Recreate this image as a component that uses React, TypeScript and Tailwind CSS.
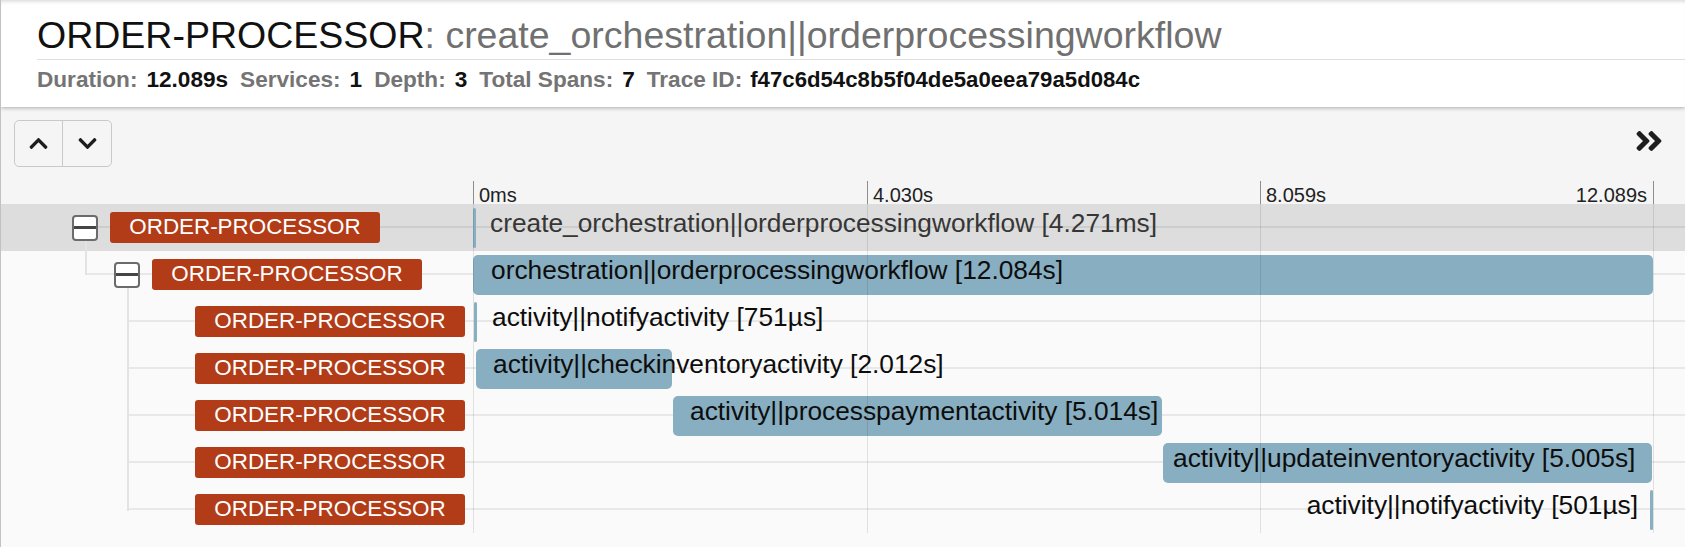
import React from "react";
import { FaChevronUp, FaChevronDown, FaAngleDoubleRight } from "react-icons/fa";

type RowData = {
  level: number;
  toggle?: boolean;
  selected?: boolean;
  barLeft: number;
  barWidth: number;
  label: string;
  labelLeft?: number;
  labelRight?: number;
  dim?: boolean;
};

const rows: RowData[] = [
  { level: 0, toggle: true, selected: true, barLeft: 0, barWidth: 3, label: "create_orchestration||orderprocessingworkflow [4.271ms]", labelLeft: 17, dim: true },
  { level: 1, toggle: true, barLeft: 0, barWidth: 1180, label: "orchestration||orderprocessingworkflow [12.084s]", labelLeft: 18 },
  { level: 2, barLeft: 1, barWidth: 3, label: "activity||notifyactivity [751µs]", labelLeft: 19 },
  { level: 2, barLeft: 3, barWidth: 196, label: "activity||checkinventoryactivity [2.012s]", labelLeft: 20 },
  { level: 2, barLeft: 200, barWidth: 489, label: "activity||processpaymentactivity [5.014s]", labelLeft: 217 },
  { level: 2, barLeft: 690, barWidth: 489, label: "activity||updateinventoryactivity [5.005s]", labelLeft: 700 },
  { level: 2, barLeft: 1177, barWidth: 3, label: "activity||notifyactivity [501µs]", labelRight: 15 },
];

const indent = [71, 113, 156];
const lineStart = [84, 84, 126];

function Toggle() {
  return (
    <div className="flex h-[26px] w-[26px] shrink-0 items-center rounded-[4px] border-2 border-[#6b6b6b] bg-white">
      <div className="h-[3px] w-full bg-[#454545]" />
    </div>
  );
}

function Row({ r }: { r: RowData }) {
  return (
    <div className={`relative flex h-[47px] ${r.selected ? "bg-[#dddddd]" : ""}`}>
      <div
        className={`absolute right-0 top-[22px] h-[2px] ${r.selected ? "bg-[#cdcdcd]" : "bg-[#e8e8e8]"}`}
        style={{ left: lineStart[r.level] }}
      />
      <div className="relative z-10 flex w-[472px] shrink-0 items-center">
        <div style={{ width: indent[r.level] }} className="shrink-0" />
        {r.toggle ? <Toggle /> : <div className="w-[26px] shrink-0" />}
        <div className="ml-[12px] flex h-[31px] w-[270px] items-center justify-center rounded-[3px] bg-[#b23c17] text-[22.4px] leading-none text-white">
          ORDER-PROCESSOR
        </div>
      </div>
      <div className="relative z-10 flex-1 pr-[32px]">
        <div className="relative h-full">
          <div
            className="absolute top-[4px] h-[40px] rounded-[5px] bg-[#88aec1]"
            style={{ left: r.barLeft, width: r.barWidth, borderRadius: r.barWidth < 6 ? 2 : 5 }}
          />
          <div
            className={`absolute top-[4px] whitespace-nowrap text-[26.3px] leading-[30px] ${r.dim ? "text-[#363636]" : "text-[#0d0d0d]"}`}
            style={r.labelRight !== undefined ? { right: r.labelRight } : { left: r.labelLeft }}
          >
            {r.label}
          </div>
        </div>
      </div>
    </div>
  );
}

export default function App() {
  return (
    <div className="relative h-[547px] w-[1685px] overflow-hidden border-l border-[#c2c2c2] bg-[#fafafa] font-['Liberation_Sans',Arial,sans-serif]">
      <header className="relative z-20 h-[107px] bg-white pl-[36px] pt-[13px] shadow-[0_1px_4px_rgba(0,0,0,0.3),inset_0_4px_4px_-3px_rgba(0,0,0,0.18)]">
        <div className="whitespace-nowrap text-[37.5px] leading-[44px]">
          <span className="text-[#111]">ORDER-PROCESSOR</span>
          <span className="text-[#707070]">: create_orchestration||orderprocessingworkflow</span>
        </div>
        <div className="mt-[2px] border-t border-[#dedede]" />
        <div className="mt-[7px] flex items-baseline whitespace-nowrap text-[22.6px] font-bold leading-[26px]">
          <span className="text-[#747474]">Duration:</span>
          <span className="ml-[9px] text-[#111]">12.089s</span>
          <span className="ml-[12px] text-[#747474]">Services:</span>
          <span className="ml-[9px] text-[#111]">1</span>
          <span className="ml-[12px] text-[#747474]">Depth:</span>
          <span className="ml-[9px] text-[#111]">3</span>
          <span className="ml-[12px] text-[#747474]">Total Spans:</span>
          <span className="ml-[9px] text-[#111]">7</span>
          <span className="ml-[12px] text-[#747474]">Trace ID:</span>
          <span className="ml-[8px] text-[22.2px] text-[#111]">f47c6d54c8b5f04de5a0eea79a5d084c</span>
        </div>
      </header>

      <div className="bg-[#f5f5f5]">
        <div className="flex h-[74px] items-start justify-between pl-[13px] pr-[20px] pt-[13px]">
          <div className="flex h-[47px] overflow-hidden rounded-[5px] border border-[#c9c9c9]">
            <button className="flex w-[48px] items-center justify-center border-r border-[#c9c9c9] text-[#1e1e1e]">
              <FaChevronUp size={21} />
            </button>
            <button className="flex w-[48px] items-center justify-center text-[#1e1e1e]">
              <FaChevronDown size={21} />
            </button>
          </div>
          <div className="mt-[11px] flex h-[20px] items-center text-[#1e1e1e]">
            <FaAngleDoubleRight size={32} />
          </div>
        </div>
        <div className="flex h-[23px]">
          <div className="w-[472px] shrink-0" />
          <div className="flex-1 pr-[32px]">
            <div className="relative h-full">
              <div className="absolute left-0 top-0 h-full w-px bg-[#8e8e8e]" />
              <div className="absolute left-[394px] top-0 h-full w-px bg-[#8e8e8e]" />
              <div className="absolute left-[787px] top-0 h-full w-px bg-[#8e8e8e]" />
              <div className="absolute left-[1180px] top-0 h-full w-px bg-[#8e8e8e]" />
              <span className="absolute left-[6px] top-[4px] text-[20px] leading-[20px] text-[#222]">0ms</span>
              <span className="absolute left-[400px] top-[4px] text-[20px] leading-[20px] text-[#222]">4.030s</span>
              <span className="absolute left-[793px] top-[4px] text-[20px] leading-[20px] text-[#222]">8.059s</span>
              <span className="absolute right-[6px] top-[4px] text-[20px] leading-[20px] text-[#222]">12.089s</span>
            </div>
          </div>
        </div>
      </div>

      <div className="relative">
        {rows.map((r, i) => (
          <Row key={i} r={r} />
        ))}
        <div className="pointer-events-none absolute left-[84px] top-[37px] h-[34px] w-[2px] bg-[#e3e3e3]" />
        <div className="pointer-events-none absolute left-[126px] top-[84px] h-[223px] w-[2px] bg-[#e3e3e3]" />
        <div className="pointer-events-none absolute inset-y-0 left-[472px] z-20 w-[1181px]">
          <div className="absolute inset-y-0 left-0 w-px bg-[rgba(0,0,0,0.1)]" />
          <div className="absolute inset-y-0 left-[394px] w-px bg-[rgba(0,0,0,0.1)]" />
          <div className="absolute inset-y-0 left-[787px] w-px bg-[rgba(0,0,0,0.1)]" />
          <div className="absolute inset-y-0 left-[1180px] w-px bg-[rgba(0,0,0,0.1)]" />
        </div>
      </div>
    </div>
  );
}
